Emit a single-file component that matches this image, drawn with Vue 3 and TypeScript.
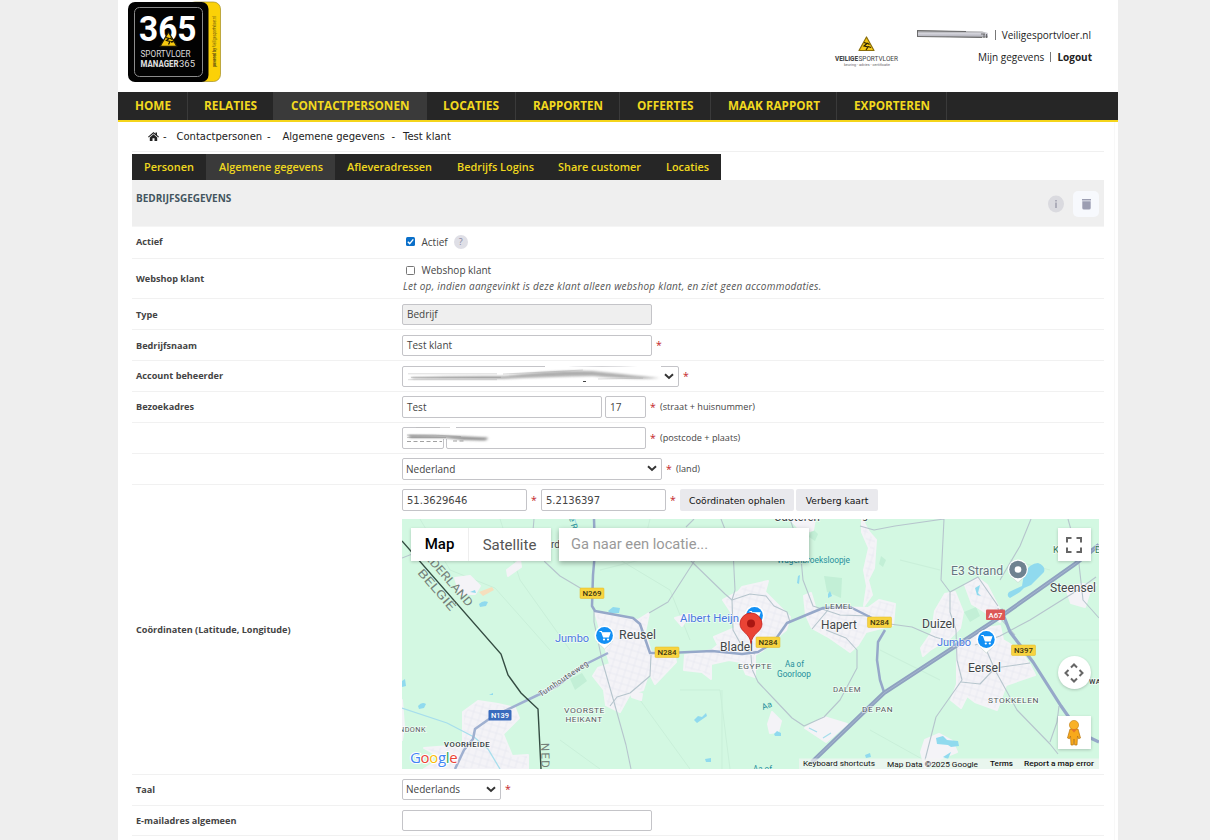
<script setup lang="ts">
interface NavItem { label: string; width: number; pad: number; textWidth: number; active?: boolean }

const menu: NavItem[] = [
  { label: 'HOME', width: 70, pad: 16.5, textWidth: 36 },
  { label: 'RELATIES', width: 86, pad: 16, textWidth: 53 },
  { label: 'CONTACTPERSONEN', width: 153, pad: 17, textWidth: 118.5, active: true },
  { label: 'LOCATIES', width: 89, pad: 16, textWidth: 56 },
  { label: 'RAPPORTEN', width: 104, pad: 16.5, textWidth: 70 },
  { label: 'OFFERTES', width: 91, pad: 17, textWidth: 56.5 },
  { label: 'MAAK RAPPORT', width: 126, pad: 16.5, textWidth: 92 },
  { label: 'EXPORTEREN', width: 110, pad: 16.5, textWidth: 76 },
]

const tabs: NavItem[] = [
  { label: 'Personen', width: 74, pad: 12, textWidth: 50 },
  { label: 'Algemene gegevens', width: 129, pad: 12.5, textWidth: 104, active: true },
  { label: 'Afleveradressen', width: 110, pad: 12, textWidth: 85 },
  { label: 'Bedrijfs Logins', width: 101, pad: 12, textWidth: 77 },
  { label: 'Share customer', width: 107, pad: 12, textWidth: 83 },
  { label: 'Locaties', width: 68, pad: 13, textWidth: 43 },
]

interface Place { t: string; x: number; y: number; w: number; s: number; c?: string }

const places: Place[] = [
  { t: 'Reusel', x: 619, y: 639, w: 37, s: 12 },
  { t: 'Bladel', x: 720, y: 651, w: 33, s: 12 },
  { t: 'Hapert', x: 821, y: 629, w: 36, s: 12 },
  { t: 'Duizel', x: 922, y: 628, w: 33, s: 12 },
  { t: 'Eersel', x: 968, y: 671.5, w: 33, s: 12 },
  { t: 'Steensel', x: 1050, y: 591.5, w: 46, s: 12 },
  { t: 'Casteren', x: 774, y: 521, w: 46, s: 12 },
  { t: 'rd', x: 551, y: 548, w: 9, s: 11 },
  { t: 'g', x: 862, y: 519, w: 6, s: 11 },
  { t: 'LEMEL', x: 825, y: 609, w: 28, s: 8, c: 'minor' },
  { t: 'EGYPTE', x: 738, y: 669, w: 34, s: 8, c: 'minor' },
  { t: 'DALEM', x: 833, y: 692, w: 28, s: 8, c: 'minor' },
  { t: 'DE PAN', x: 862, y: 711.5, w: 31, s: 8, c: 'minor' },
  { t: 'STOKKELEN', x: 988, y: 702.5, w: 51, s: 8, c: 'minor' },
  { t: 'VOORSTE', x: 564, y: 713, w: 41, s: 8, c: 'minor' },
  { t: 'HEIKANT', x: 565.5, y: 721.5, w: 37, s: 8, c: 'minor' },
  { t: 'VOORHEIDE', x: 444, y: 747, w: 46, s: 8, c: 'minor dark' },
  { t: 'NDONK', x: 399, y: 732, w: 27, s: 8, c: 'minor' },
  { t: 'WA', x: 1089, y: 684, w: 12, s: 8, c: 'minor dark' },
  { t: 'Jumbo', x: 555, y: 641.5, w: 34, s: 11.5, c: 'shop' },
  { t: 'Jumbo', x: 937, y: 646, w: 34, s: 11.5, c: 'shop' },
  { t: 'Albert Heijn', x: 680, y: 621.5, w: 59, s: 11.5, c: 'shop' },
  { t: 'E3 Strand', x: 951, y: 575, w: 52, s: 12, c: 'poi' },
  { t: 'Wagenbroeksloopje', x: 777, y: 563, w: 73, s: 8.5, c: 'water' },
  { t: 'Aa of', x: 785, y: 667, w: 19, s: 8.5, c: 'water' },
  { t: 'Goorloop', x: 777, y: 677, w: 34, s: 8.5, c: 'water' },
  { t: 'Aa of', x: 753, y: 772, w: 19, s: 8.5, c: 'water' },
  { t: 'K', x: 1053, y: 553, w: 6, s: 9.5, c: 'green' },
  { t: 'E', x: 1095, y: 553, w: 5, s: 9.5, c: 'green' },
]

interface Shield { t: string; x: number; y: number; w: number; kind: string }
const shields: Shield[] = [
  { t: 'N269', x: 580, y: 588, w: 24, kind: 'yellow' },
  { t: 'N284', x: 655, y: 647, w: 24, kind: 'yellow' },
  { t: 'N284', x: 756, y: 637, w: 24, kind: 'yellow' },
  { t: 'N284', x: 867.5, y: 617, w: 24, kind: 'yellow' },
  { t: 'N397', x: 1011.5, y: 645, w: 24, kind: 'yellow' },
  { t: 'A67', x: 986, y: 609.5, w: 19, kind: 'red' },
  { t: 'N139', x: 488.5, y: 710, w: 23, kind: 'blue' },
]

const towns: string[] = [
  'M595 612L616 616 638 620 649 613 645 632 651 652 674 653 676 662 655 684 649 672 643 690 630 694 620 712 606 705 604 690 593 676 598 668 610 664 603 640Z',
  'M463 745L463 712 478 701 498 704 515 708 519 718 503 734 512 756 528 755 528 769 424 769 442 758 424 748Z',
  'M723 600L738 592 742 587 768 581 765 592 770 597 790 617 786 630 774 640 762 651 755 655 755 677 746 674 741 662 729 660 711 664 711 679 702 672 684 670 685 655 712 650 718 645 714 637 735 628 731 612Z',
  'M806 615L804 596 811 593 816 610 830 607 868 608 879 600 895 604 893 625 866 632 858 645 850 652 830 638 812 628Z',
  'M862 519L869 532 876 540 874 568 868 580 872 595 864 606 867 586 864 570 869 548 862 532Z',
  'M945 594L955 592 963 612 960 628 950 638 930 650 923 656 921 648 932 632 935 611Z',
  'M965 585L978 578 987 585 1001 612 1000 622 985 612 972 604Z',
  'M957 648L985 628 1000 626 1003 640 1020 650 1030 665 1035 675 1006 685 997 710 975 702 967 696 961 708 951 700 957 684Z',
  'M1066 588L1082 584 1096 585 1089 594 1085 607 1071 603Z',
  'M772 712L781 721 778 732 770 733 768 724Z',
  'M805 728L824 717 847 724 826 742Z',
  'M402 700L402 740 404 726Z',
  'M925 740L939 734 952 741 957 752 942 758 925 768 921 752Z',
  'M455 578L470 576 480 586 475 594 460 594Z',
  'M507 570L520 560 521 567 508 576Z',
  'M675 618L690 614 682 626Z',
  'M630 691L642 694 641 700 632 697Z',
  'M790 519L815 519 813 530 803 533Z',
]

const minorRoads: string[] = [
  'M534 519L532 542 545 562 560 576 592 595',
  'M594 611L594 622 602 660 614 702 626 745 631 769',
  'M649 613L668 602 695 560 710 530',
  'M694 519L686 527M721 519L733 550 735 590 732 600',
  'M690 560L725 594 732 600',
  'M732 600L733 630 744 650 755 654',
  'M732 600L750 594 766 596 774 606 787 612 790 622',
  'M751 655L752 669 758 682 775 700 792 718 804 726 824 717 840 700 857 668 857 650 846 638 826 630',
  'M790 519L800 548 803 580 813 606 840 615 870 616',
  'M860 526L874 530 895 526 944 519 941 580 950 592 950 612 956 630 957 660 962 680 936 717 925 760',
  'M950 592L978 577 998 606',
  'M890 624L912 627 935 637 961 645',
  'M998 608L1000 618 1015 635',
  'M1096 577L1078 590 1030 620 1000 636 975 645',
  'M1068 519L1078 555 1083 600 1099 618',
  'M1000 580L1020 546 1031 519',
  'M982 640L995 670 1017 710 1050 744 1058 754',
  'M1050 742L1057 722 1059 706',
  'M610 706L617 697 630 693 650 676 651 655',
  'M402 558L430 547 460 555',
  'M812 629L833 604M961 682L980 684 995 668 1030 663',
]
</script>

<template>
  <div class="page">
    <header class="top">
      <svg class="logo" width="94" height="84" viewBox="0 0 94 84">
        <rect x="60" y="2" width="32.500" height="79.500" rx="7" fill="#fbd107" stroke="#a28c22" stroke-width=".7" />
        <rect x="0" y="2" width="80.500" height="80" rx="7" fill="#020202" />
        <rect x="6.500" y="7.500" width="68" height="69" rx="5" fill="none" stroke="#8b8b8b" stroke-width="1" />
        <text x="11" y="41" class="logo-num" textLength="57.500" lengthAdjust="spacingAndGlyphs">365</text>
        <path d="M40.500 32L49 46.500H32Z" fill="#f6c910" stroke="#1f1a04" stroke-width="1.300" stroke-linejoin="round" />
        <path d="M38 37.500l3 1-2.500 2 3.500 1-1.500 3M42 38l2 1.500M43 42l2.500-.5" fill="none" stroke="#171202" stroke-width="1.300" />
        <text x="12.500" y="57.300" class="logo-txt" textLength="50" lengthAdjust="spacingAndGlyphs">SPORTVLOER</text>
        <text x="12.500" y="67" class="logo-txt heavy" textLength="38" lengthAdjust="spacingAndGlyphs">MANAGER</text>
        <text x="51" y="67" class="logo-txt" textLength="16" lengthAdjust="spacingAndGlyphs">365</text>
        <text class="logo-side" transform="translate(88 67) rotate(-90)" textLength="51" lengthAdjust="spacingAndGlyphs"><tspan class="heavy">powered by</tspan> Veiligesportvloer.nl</text>
      </svg>
      <div class="account">
        <svg class="brand" width="68" height="36" viewBox="0 0 68 36">
          <path d="M33.500 2L41 15.500H26Z" fill="#f3c715" stroke="#8a6d0c" stroke-width="1.200" stroke-linejoin="round" />
          <path d="M31 7.500l3 1-3 2.500 4 1-2 3M34 8l2.500 1.500M35 11.500l3 1" fill="none" stroke="#2a2205" stroke-width="1.200" />
          <text x="2" y="26" class="brand-name heavy" textLength="23" lengthAdjust="spacingAndGlyphs">VEILIGE</text>
          <text x="25.500" y="26" class="brand-name" textLength="39.500" lengthAdjust="spacingAndGlyphs">SPORTVLOER</text>
          <text x="11" y="30.800" class="brand-tag" textLength="46" lengthAdjust="spacingAndGlyphs">keuring - advies - certificatie</text>
        </svg>
        <div class="links">
          <div class="line">
            <svg class="masked" width="73" height="10" viewBox="0 0 73 10">
              <defs><linearGradient id="mask" x1="0" x2="0" y1="0" y2="1"><stop offset="0" stop-color="#888" /><stop offset=".4" stop-color="#d5d5dc" /><stop offset=".75" stop-color="#bbbbc4" /><stop offset="1" stop-color="#888" /></linearGradient></defs>
              <path d="M1 1.500L66 2.500 72 4V8.500H66L1 7.500Z" fill="url(#mask)" />
              <path d="M1 7.500L66 8.500M1 1.500L50 2.500M1.500 2v5M65 5h4M68 5v4M70.500 5v4" fill="none" stroke="#555" stroke-width=".8" />
            </svg>
            <i></i><span class="site">Veiligesportvloer.nl</span>
          </div>
          <div class="line second"><span class="mine">Mijn gegevens</span><i></i><b>Logout</b></div>
        </div>
      </div>
    </header>

    <nav class="menu">
      <a v-for="m in menu" :key="m.label" :class="{ active: m.active }" :style="{ width: m.width + 'px', paddingLeft: m.pad + 'px' }">
        <svg :width="m.textWidth" height="28"><text x="0" y="18" :textLength="m.textWidth" lengthAdjust="spacingAndGlyphs">{{ m.label }}</text></svg>
      </a>
    </nav>

    <main>
      <div class="crumbs">
        <svg width="11" height="9" viewBox="0 0 11 9"><path d="M0 4.700L5.500 0 7.500 1.700V.5H9V3L11 4.700 10.300 5.400 5.500 1.400.7 5.400ZM1.800 5.400L5.500 2.300 9.200 5.400V9H6.500V6.200H4.500V9H1.800Z" fill="#222" /></svg>
        <span class="c0">-</span><span class="c1">Contactpersonen</span><span class="c2">-</span><span class="c3">Algemene gegevens</span><span class="c4">-</span><span class="c5">Test klant</span>
      </div>

      <nav class="tabs">
        <a v-for="t in tabs" :key="t.label" :class="{ active: t.active }" :style="{ width: t.width + 'px', paddingLeft: t.pad + 'px' }">
          <svg :width="t.textWidth" height="26"><text x="0" y="17" :textLength="t.textWidth" lengthAdjust="spacingAndGlyphs">{{ t.label }}</text></svg>
        </a>
      </nav>

      <section class="head">
        <h2>BEDRIJFSGEGEVENS</h2>
        <div class="tools">
          <svg width="16" height="18" viewBox="0 0 16 18"><ellipse cx="8" cy="9" rx="8" ry="8.500" fill="#dadadf" /><path d="M8 5v1.500M8 7.500v5.500" stroke="#9696a6" stroke-width="1.300" /></svg>
          <span class="trash"><svg width="9" height="12" viewBox="0 0 9 12"><path d="M0 1H9V2.600H0ZM.3 3.300H8.700V10Q8.700 11.500 7 11.500H2Q.3 11.500 .3 10Z" fill="#9c9eb2" /></svg></span>
        </div>
      </section>

      <div class="row h32 up"><label>Actief</label>
        <div class="field lift"><svg class="check" width="9" height="9" viewBox="0 0 9 9"><rect width="9" height="9" rx="1.500" fill="#0a6fc9" /><path d="M1.800 4.700L3.700 6.600 7.300 2.400" fill="none" stroke="#fff" stroke-width="1.400" /></svg><span class="opt">Actief</span><span class="help">?</span></div>
      </div>
      <div class="row h40"><label>Webshop klant</label>
        <div class="field stack">
          <div class="optline"><svg class="check" width="9" height="9" viewBox="0 0 9 9"><rect x=".5" y=".5" width="8" height="8" rx="1" fill="#fff" stroke="#767676" /></svg><span class="opt">Webshop klant</span></div>
          <em>Let op, indien aangevinkt is deze klant alleen webshop klant, en ziet geen accommodaties.</em>
        </div>
      </div>
      <div class="row"><label>Type</label><div class="field"><span class="box w250 off">Bedrijf</span></div></div>
      <div class="row"><label>Bedrijfsnaam</label><div class="field"><span class="box w250">Test klant</span><s>*</s></div></div>
      <div class="row up"><label>Account beheerder</label>
        <div class="field"><span class="box w277 select">
          <svg class="smear" width="275" height="23" viewBox="0 0 275 23">
            <defs><filter id="soft" x="-5%" y="-60%" width="110%" height="220%"><feGaussianBlur stdDeviation="1.500 1" /></filter></defs>
            <path d="M142 2Q190-1 235 1L258 2V0H142Z" fill="#fff" />
            <path d="M8 11.500Q50 9.500 100 10 150 4 190 5 235 10 257 12Q235 14 190 10 140 11 100 13L10 13Z" fill="#8d8d8d" filter="url(#soft)" opacity=".7" />
            <path d="M5 7.800H94M5 13.700H94M100 8Q145 6 180 4M195 13l45-.8" fill="none" stroke="#999" stroke-width=".7" opacity=".5" />
            <path d="M180 15.500h3" stroke="#444" stroke-width="1" />
            <path d="M8 11.300H98" stroke="#777" stroke-width="1" opacity=".35" />
          </svg>
          <svg class="chev" width="10" height="7" viewBox="0 0 10 7"><path d="M1 1.300L5 5 9 1.300" /></svg>
        </span><s>*</s></div></div>
      <div class="row up"><label>Bezoekadres</label><div class="field"><span class="box w200 tall">Test</span><span class="box w41 tall gap3">17</span><s>*</s><span class="note">(straat + huisnummer)</span></div></div>
      <div class="row"><label></label><div class="field"><span class="box w42 tall"></span><span class="box w200b tall"></span>
        <svg class="smear2" width="90" height="19" viewBox="0 -5 90 19">
          <path d="M34-5H50V7H34Z" fill="#fff" />
          <path d="M10-4H44V-5H10Z" fill="#bbb" opacity=".6" />
          <path d="M1 9.500H36M47 9H60" stroke="#555" stroke-width="1" stroke-dasharray="4 2.500" opacity=".55" />
          <path d="M2 3Q40 3 82 5.500L80 8.500Q60 9 40 6L4 6Z" fill="#777" filter="url(#soft)" opacity=".8" />
          <path d="M1 3Q30 2.500 55 4.500M1 5.500H40" fill="none" stroke="#777" stroke-width=".7" opacity=".5" />
        </svg><s>*</s><span class="note">(postcode + plaats)</span></div></div>
      <div class="row"><label></label><div class="field"><span class="box w260 tall select">Nederland<svg class="chev" width="10" height="7" viewBox="0 0 10 7"><path d="M1 1.300L5 5 9 1.300" /></svg></span><s>*</s><span class="note">(land)</span></div></div>

      <div class="row map-row"><label>Coördinaten (Latitude, Longitude)</label>
        <div class="field stack">
          <div class="coords"><span class="box w125 tall num">51.3629646</span><s>*</s><span class="box w125 tall num">5.2136397</span><s>*</s><button class="b1">Coördinaten ophalen</button><button class="b2">Verberg kaart</button></div>
          <div class="map">
            <svg class="geo" width="697" height="250" viewBox="402 519 697 250">
              <defs>
                <pattern id="streets" width="7" height="7" patternUnits="userSpaceOnUse" patternTransform="rotate(17)"><rect width="7" height="7" fill="#f4f3f7" /><path d="M0 3H7M3 0V7" stroke="#e8e9f1" stroke-width=".8" /></pattern>
              </defs>
              <rect x="402" y="519" width="697" height="250" fill="#d3f8e2" />
              <g fill="#c2efd6">
                <path d="M824 576l18 2-1 20-14-6ZM570 679l12-6 5 8-12 9ZM964 612l12-5 4 9-10 6ZM881 556l5 4-3 7-4-3ZM640 640h5v10h-5ZM812 528l6 6-3 7-6-4Z" />
              </g>
              <g fill="none" stroke="#c9efd9" stroke-width="1"><path d="M420 519L450 570 495 588 550 650M500 519L520 580 570 650M620 560L670 590 690 640M650 519L640 560 600 570M680 690L720 690 730 769M560 740L600 769M640 700L690 769M820 760L840 769M880 650L940 680M900 560L940 570M1030 640L1099 640M870 730L940 769M1010 560L1050 570M722 690V769M760 560L800 560" /></g>
              <path v-for="(d, i) in towns" :key="i" :d="d" :fill="i < 8 ? 'url(#streets)' : '#f4f3f7'" stroke="#f4f3f7" stroke-width="2" stroke-linejoin="round" />
              <g fill="#90daee">
                <path d="M1024 574Q1030 563 1038 563 1046 566 1044 572L1031 585 1024 588 1020 592 1010 598Q1006 596 1009 592L1022 586Z" />
                <path d="M975 588l5-3-2 8 3 3-4-1ZM936 738l7-2 4 4 11 1 1 5-8 1-3-2-11-1ZM943 757l8-5-3 7ZM479 604q4-4 9-2l-2 4-6 1ZM470 592l5-2 1 3ZM418 706q4-5 8-2l-2 4-5 1ZM402 681l3-2 1 7-4 1ZM694 720l4-4 4 1 4-4 1 3-10 7ZM705 759l6-1v4h-5ZM774 734l3-3 4 2v3h-6ZM798 576l2-1-1 9-2-1ZM828 594l2-3 2 5-4 2ZM608 611l5-4 7 1-1 5h-9ZM865 755l5-2 1 4-5 1ZM489 695l4-2v2Z" />
              </g>
              <path d="M479 592L492 587 494 590 483 596Z" fill="#f6dfbd" />
              <path d="M402 708L447 723 474 737 488 749 500 769M575 519l4 20M809 728l8 4M823 738l8-5" fill="none" stroke="#a7deec" stroke-width="1.300" />
              <g fill="none" stroke="#b6c5cd" stroke-width="1.100" stroke-linejoin="round"><path v-for="(d, i) in minorRoads" :key="i" :d="d" /></g>
              <g fill="none" stroke="#96a8c9" stroke-width="2.500" stroke-linejoin="round">
                <path d="M455 769L464 750 473 739 475 729 492 717 540 694 557 686 584 665 608 653" stroke="#9fb0d0" />
                <path d="M594 519L595 552 593 575 592 606 595 611 633 618 640 624 650 653 668 653 712 651 742 654 758 652 773 643 787 623 823 608 850 607 870 617 880 623" />
                <path d="M885 630L878 642 877 660 880 680 884 692" />
                <path d="M1001 609L1010 632 1033 662 1061 706 1080 733 1099 742" stroke-width="3.200" />
              </g>
              <path d="M812 762L864 712 884 693 1000 617 1075 564 1099 545" fill="none" stroke="#8fa2c0" stroke-width="4.300" />
              <path d="M812 762L864 712 884 693 1000 617 1075 564 1099 545" fill="none" stroke="#a4b4ce" stroke-width="1" />
              <path d="M402 541L501 654 508 675 521 693 538 709 541 769" fill="none" stroke="#344c42" stroke-width="1.400" />
              <g class="country"><text transform="translate(418 550) rotate(49)" textLength="76" lengthAdjust="spacingAndGlyphs">NEDERLAND</text><text transform="translate(417 573) rotate(49)" textLength="51" lengthAdjust="spacingAndGlyphs">BELGIË</text><text transform="translate(541 743) rotate(89)" letter-spacing="1.200">NED</text></g>
              <text class="lbl minor" transform="translate(541 697) rotate(-34)" font-size="8" textLength="58" lengthAdjust="spacingAndGlyphs">Turnhoutseweg</text>
              <text class="lbl water" transform="translate(763 710) rotate(-20)" font-size="8.500">Aa</text>
              <text class="lbl water" transform="translate(569 518) rotate(75)" font-size="8.500">e R</text>
              <text v-for="(p, i) in places" :key="i" :x="p.x" :y="p.y" :font-size="p.s" :textLength="p.w" lengthAdjust="spacingAndGlyphs" :class="['lbl', p.c]">{{ p.t }}</text>
              <g v-for="(s, i) in shields" :key="'s' + i" :class="['shield', s.kind]"><rect :x="s.x" :y="s.y" :width="s.w" height="10.500" rx="1" /><text :x="s.x + s.w / 2" :y="s.y + 8" text-anchor="middle" :textLength="s.w - 5" lengthAdjust="spacingAndGlyphs">{{ s.t }}</text></g>
              <g v-for="c in [[604.500, 635.500], [986.300, 639.500], [754.500, 615.500]]" :key="c[0]" :transform="`translate(${c[0]} ${c[1]})`">
                <path d="M-8 6L0 13.500 8 6Z" fill="#fff" stroke="#c3d3cc" stroke-width=".6" /><circle r="10" fill="#fff" /><circle r="8.400" fill="#1290f5" />
                <path d="M-5-4h2l2 5.500h5l1.500-4.200h-7.500" fill="#fff" stroke="#fff" stroke-width="1.100" /><circle cx="-.5" cy="4" r="1.100" fill="#fff" /><circle cx="3.500" cy="4" r="1.100" fill="#fff" />
              </g>
              <g transform="translate(1018 569.500)"><path d="M-8 6L0 13 8 6Z" fill="#fff" stroke="#c3d3cc" stroke-width=".6" /><circle r="10" fill="#fff" /><circle r="8.800" fill="#6f8290" /><circle r="3.300" fill="#fff" /></g>
              <path d="M751 643.500C750 633 740 632 740 624A11 11 0 0 1 762 624C762 632 752 633 751 643.500Z" fill="#ea4335" stroke="#c5221f" stroke-width=".8" /><circle cx="751" cy="623.500" r="4" fill="#a91612" />
              <rect x="799" y="758.500" width="300" height="10.500" fill="#f5f5f5" opacity=".65" />
              <g class="legal"><text x="803" y="766" textLength="72" lengthAdjust="spacingAndGlyphs">Keyboard shortcuts</text><text x="887" y="767" textLength="91" lengthAdjust="spacingAndGlyphs">Map Data ©2025 Google</text><text x="990" y="766" textLength="23" class="strong" lengthAdjust="spacingAndGlyphs">Terms</text><text x="1024" y="766" textLength="70" class="strong" lengthAdjust="spacingAndGlyphs">Report a map error</text></g>
              <text x="410" y="763" class="google"><tspan fill="#4285f4">G</tspan><tspan fill="#ea4335">o</tspan><tspan fill="#fbbc05">o</tspan><tspan fill="#4285f4">g</tspan><tspan fill="#34a853">l</tspan><tspan fill="#ea4335">e</tspan></text>
            </svg>
            <div class="types"><b>Map</b><span>Satellite</span></div>
            <div class="search">Ga naar een locatie...</div>
            <div class="ctl full"><svg width="16" height="16" viewBox="0 0 16 16"><path d="M1 5.500V1H5.500M10.500 1H15V5.500M15 10.500V15H10.500M5.500 15H1V10.500" fill="none" stroke="#666" stroke-width="2" /></svg></div>
            <div class="ctl cam"><svg width="20" height="20" viewBox="0 0 20 20"><path d="M7 4.500L10 1.500 13 4.500M7 15.500L10 18.500 13 15.500M4.500 7L1.500 10 4.500 13M15.500 7L18.500 10 15.500 13" fill="none" stroke="#666" stroke-width="2" /></svg></div>
            <div class="ctl peg"><svg width="16" height="26" viewBox="0 0 16 26"><path d="M4 9H12L14.500 18 12.500 18.700 11.500 16 11 25H8.700L8 19 7.300 25H5L4.500 16 3.500 18.700 1.500 18Z" fill="#f8a91b" stroke="#b8730c" stroke-width=".7" /><circle cx="8" cy="5" r="4.600" fill="#f9b127" stroke="#c07c12" stroke-width=".6" /><path d="M5 9.200L8 12.500 11 9.200Z" fill="#e5742b" /></svg></div>
          </div>
        </div>
      </div>

      <div class="row up"><label>Taal</label><div class="field lift"><span class="box w99 select">Nederlands<svg class="chev" width="10" height="7" viewBox="0 0 10 7"><path d="M1 1.300L5 5 9 1.300" /></svg></span><s>*</s></div></div>
      <div class="row last"><label>E-mailadres algemeen</label><div class="field"><span class="box w250"></span></div></div>
    </main>
  </div>
</template>

<style>
body { background: #eee; overflow: hidden; }
</style>

<style scoped>
* { box-sizing: border-box; }
.page { width: 1000px; height: 840px; margin-left: 118px; background: #fff; overflow: hidden; font-family: "Open Sans", "Noto Sans", sans-serif; font-size: 9.5px; color: #444; }
.page svg { display: block; flex: none; }
.top { height: 92px; display: flex; justify-content: space-between; padding: 0 26px 0 10px; }
.logo-num { font: 700 35px Roboto, sans-serif; fill: #fff; }
.logo-txt { font: 400 9.500px Roboto, sans-serif; fill: #ddd; }
.logo-side { font: 400 4.500px Roboto, sans-serif; fill: #625311; }
.account { display: flex; }
.brand { margin: 35px 14px 0 0; }
.brand-name { font: 400 8px Roboto, sans-serif; fill: #444; }
.heavy { font-weight: 800; }
.brand-tag { font: 400 4px Roboto, sans-serif; fill: #666; }
.links { width: 177px; padding-top: 27px; font-size: 10px; color: #222; }
.line { height: 15px; display: flex; align-items: center; justify-content: flex-end; white-space: nowrap; padding-right: 1px; }
.second { margin-top: 7px; padding-right: 0; }
.line i { flex: none; width: 1px; height: 10px; background: #777; margin: 1px 6px 0; }
.masked { position: relative; top: -1px; }
.menu { height: 30px; background: #262626; border-bottom: 2px solid #f5d51b; display: flex; }
.menu a { height: 28px; border-right: 1px solid #3a3a3a; }
.menu svg, .tabs svg { overflow: visible; }
.active { background: #3a3a3a; }
.menu text { font: 700 12px "Open Sans", sans-serif; fill: #f2d91f; }
main { height: 718px; margin-right: 3px; padding: 0 10px 0 14px; border-right: 1px solid #f8f8f8; }
.crumbs { height: 30px; border-bottom: 1px solid #f0f0f0; display: flex; align-items: center; padding-left: 16px; font: 10px "DejaVu Sans", sans-serif; color: #222; white-space: nowrap; }
.c0 { width: 17.5px; padding-left: 4px; }
.c1 { width: 90.500px; }
.c2 { width: 15.5px; }
.c3 { width: 109px; }
.c4 { width: 11.500px; }
.tabs { margin-top: 2px; height: 26px; width: 589px; background: #262626; display: flex; }
.tabs a { height: 26px; }
.tabs text { font: 600 11px "Open Sans", sans-serif; fill: #f0d81f; }
.head { height: 47px; background: #efefef; display: flex; justify-content: space-between; padding: 10px 5px 0 4px; border-bottom: 1px solid #f5f5f5; }
h2 { margin: 0; font-size: 10px; line-height: 16px; font-weight: 700; color: #435560; }
.tools { display: flex; align-items: center; height: 28px; gap: 9px; }
.trash { width: 26px; height: 26px; border-radius: 5px; background: #f7f9fd; display: flex; align-items: center; justify-content: center; }
.row { height: 31px; display: grid; grid-template-columns: 270px 1fr; border-bottom: 1px solid #f1f1f1; }
.row label { align-self: center; padding-left: 4px; font-size: 9.15px; font-weight: 700; color: #444; }
.up label { padding-bottom: 2px; }
.lift { padding-bottom: 2px; }
.h32 { height: 32px; }
.h40 { height: 40px; }
.last { height: 30px; }
.field { display: flex; align-items: center; position: relative; white-space: nowrap; }
.stack { flex-direction: column; align-items: flex-start; }
.optline { display: flex; align-items: center; height: 16px; margin-top: 3px; }
.check { margin-left: 4px; }
.opt { margin-left: 6.5px; font-size: 10px; }
.help { width: 14px; height: 14px; margin-left: 6px; border-radius: 50%; background: #dfdfe6; color: #8585a0; font-size: 9px; line-height: 14px; text-align: center; }
em { font-size: 10px; line-height: 15px; margin: 1px 0 0 1px; letter-spacing: .26px; color: #555; }
.box { position: relative; height: 21px; border: 1px solid #c4c4c8; border-radius: 2px; background: #fff; padding: 0 4px; line-height: 19px; font-size: 10px; color: #444; white-space: nowrap; }
.tall { height: 22px; line-height: 21px; }
.off { background: #efefef; }
.select { padding-left: 3px; }
.num { font: 10px/21px "DejaVu Sans", sans-serif; }
.w250 { width: 250px; }
.w277 { width: 277px; }
.w200 { width: 200px; }
.w200b { width: 200px; margin-left: 2px; }
.w41 { width: 41px; }
.w42 { width: 42px; }
.w260 { width: 260px; }
.w125 { width: 125px; }
.w99 { width: 99px; }
.gap3 { margin-left: 3px; }
.chev { position: absolute; right: 4px; top: 6px; }
.chev path { fill: none; stroke: #333; stroke-width: 2; }
.smear { position: absolute; left: 0; top: -1px; }
.smear2 { position: absolute; left: 4px; top: 4px; }
s { width: 14px; text-align: center; text-decoration: none; font-size: 10.5px; line-height: 14px; color: #c32128; }
.note { font-size: 9.15px; padding-bottom: 1px; }
.map-row { height: 290px; }
.coords { display: flex; align-items: center; height: 22px; margin-top: 4px; }
button { height: 22px; padding: 0; border: 0; border-radius: 2px; background: #e9e9ed; color: #111; font: 9.2px "DejaVu Sans", sans-serif; white-space: nowrap; }
.b1 { width: 114px; }
.b2 { width: 82px; margin-left: 2px; }
.map { position: relative; width: 697px; height: 250px; margin-top: 8px; overflow: hidden; font-family: Roboto, sans-serif; }
.lbl { font-family: Roboto, sans-serif; fill: #414648; stroke: #ffffffb0; stroke-width: 1.500px; paint-order: stroke; }
.minor { fill: #555b5e; letter-spacing: .5px; }
.dark { fill: #33383a; font-weight: 500; }
.shop { fill: #4778e0; }
.poi { fill: #64747f; }
.water { fill: #258f9c; stroke: #d3f8e2; }
.green { fill: #337b55; }
.country text { font: 11.500px Roboto, sans-serif; fill: #748079; }
.shield text { font: 500 7.500px Roboto, sans-serif; fill: #3b3412; }
.yellow rect { fill: #f7d33f; stroke: #e2b923; stroke-width: .5; }
.red rect { fill: #dc5757; }
.blue rect { fill: #386bbd; }
.shield.red text, .shield.blue text { fill: #fff; }
.legal text { font: 8px Roboto, sans-serif; fill: #111; }
.legal .strong { font-weight: 500; }
.google { font: 500 15px "Open Sans", sans-serif; letter-spacing: -.35px; stroke: #fff; stroke-width: 2px; paint-order: stroke; }
.types { position: absolute; left: 9px; top: 9px; width: 140px; height: 33px; display: flex; align-items: center; background: #fff; box-shadow: 0 1px 3px #0003; font-size: 15px; color: #555; }
.types b { width: 58px; line-height: 33px; text-align: center; font-weight: 500; color: #000; border-right: 1px solid #eee; }
.types span { width: 81px; text-align: center; }
.search { position: absolute; left: 157px; top: 9px; width: 250px; height: 33px; padding-left: 12px; background: #fff; box-shadow: 0 2px 5px #0005; font-size: 14.700px; line-height: 33px; color: #999; }
.ctl { position: absolute; left: 656px; width: 33px; height: 33px; display: flex; align-items: center; justify-content: center; background: #fff; box-shadow: 0 1px 3px #0003; }
.ctl svg { margin-right: 1px; }
.full { top: 9px; }
.cam { top: 137px; border-radius: 50%; }
.peg { top: 197px; }
</style>
